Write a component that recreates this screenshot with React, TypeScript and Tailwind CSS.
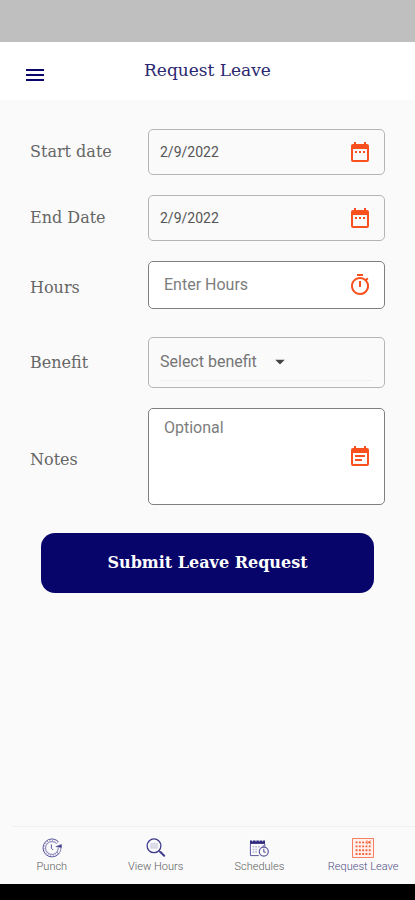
import clsx from "clsx";
import type { ReactNode } from "react";
import { useState } from "react";
import { MdDateRange, MdEventNote, MdMenu, MdOutlineTimer } from "react-icons/md";

const serif = "font-['DejaVu_Serif',serif]";

type FieldRowProps = {
  id: string;
  label: string;
  labelClass?: string;
  boxClass: string;
  icon?: ReactNode;
  children: ReactNode;
};

function FieldRow({ id, label, labelClass, boxClass, icon, children }: FieldRowProps) {
  return (
    <div className="flex items-center">
      <label
        htmlFor={id}
        className={clsx(serif, "w-[118px] shrink-0 text-base text-[#666666]", labelClass)}
      >
        {label}
      </label>
      <div className={clsx("flex min-w-0 flex-1 items-center rounded-[5px] border pr-3", boxClass)}>
        {children}
        {icon}
      </div>
    </div>
  );
}

function PunchIcon() {
  return (
    <svg viewBox="0 0 20 20" className="size-5" fill="none" stroke="#5c58a0" aria-hidden="true">
      <path d="M16.6 3.8A9 9 0 1 0 16.8 15.8" strokeWidth="1" />
      <path d="M14.6 5.6A6.4 6.4 0 1 0 14.8 14.2" strokeWidth="0.8" />
      <path d="M15.6 4.8A7.7 7.7 0 1 0 15.9 14.9" strokeWidth="1.4" strokeDasharray="1 1.6" opacity="0.5" />
      <path d="M9.4 6.4v3.8l1.8 1.8" strokeWidth="1" />
      <path d="M13.8 8.6l3-1 2.6-1.2.2 3.2z" fill="#3c3785" strokeWidth="0.6" />
      <path d="M19 9.4c0 2.4-.8 4.4-2.2 6.4l-2-1.6c1-1.4 1.4-2.8 1.4-4.4" strokeWidth="0.8" />
    </svg>
  );
}

function ViewHoursIcon() {
  return (
    <svg viewBox="0 0 20 20" className="size-5" fill="none" stroke="#3f3b8c" aria-hidden="true">
      <circle cx="8" cy="7.8" r="6.9" strokeWidth="1.3" />
      <path d="M4.2 5.8h7.6M3.8 7.8h8.4M4.2 9.8h7.6" strokeWidth="1.2" opacity="0.25" />
      <path d="M12.8 12.6l1.6 1.4" strokeWidth="1.2" />
      <path d="M14.4 14l3.8 3.8" strokeWidth="2" strokeLinecap="round" />
    </svg>
  );
}

function SchedulesIcon() {
  return (
    <svg viewBox="0 0 20 20" className="size-5" fill="none" stroke="#5c58a0" aria-hidden="true">
      <path d="M1 2.5h15v3.4H1z" fill="#2f2a80" stroke="none" />
      <path d="M3.5 1v2.6M7 1v2.6M10.4 1v2.6M13.6 1v2.6" stroke="#ffffff" strokeWidth="0.7" />
      <path d="M1.4 6v11.6h8.4M15.8 6v1.8" strokeWidth="1" />
      <path d="M3.6 8.8h8M3.6 11.4h5.6M3.6 14h5" strokeWidth="1.5" strokeDasharray="1.7 1" opacity="0.4" />
      <circle cx="14.8" cy="13.6" r="4.5" strokeWidth="1.2" />
      <path d="M13.4 8h2.8M14.8 10.8v3l1.8.8" strokeWidth="1.1" />
    </svg>
  );
}

function RequestLeaveIcon() {
  return (
    <svg viewBox="0 0 22 20" className="h-5 w-[22px]" fill="none" stroke="#f4623f" aria-hidden="true">
      <rect x="0.6" y="0.6" width="20.8" height="18.8" fill="#fff1ec" strokeWidth="0.8" />
      <path
        d="M3.6 4.4h15M3.6 8.4h15M3.6 12.2h15M3.6 16h15"
        strokeWidth="1.9"
        strokeDasharray="1.9 1.4"
      />
      <path d="M14.8 2.4l3.8 3.8M18.6 2.4l-3.8 3.8" strokeWidth="0.9" />
    </svg>
  );
}

const tabs = [
  { label: "Punch", icon: <PunchIcon /> },
  { label: "View Hours", icon: <ViewHoursIcon /> },
  { label: "Schedules", icon: <SchedulesIcon /> },
  { label: "Request Leave", icon: <RequestLeaveIcon />, active: true },
];

const iconClass = "size-6 shrink-0 text-[#f9501e]";
const inputClass = "min-w-0 flex-1 bg-transparent outline-none placeholder:text-[#7d7d7d]";

export default function App() {
  const [startDate, setStartDate] = useState("2/9/2022");
  const [endDate, setEndDate] = useState("2/9/2022");
  const [hours, setHours] = useState("");
  const [benefit, setBenefit] = useState("");
  const [notes, setNotes] = useState("");

  return (
    <div className="flex min-h-screen flex-col bg-[#fafafa] font-[Roboto,sans-serif]">
      <div className="h-[42px] bg-[#bfbfbf]" />
      <header className="flex h-[58px] bg-white px-[23px]">
        <button type="button" aria-label="Menu" className="flex items-center pt-2 text-[#0a066b]">
          <MdMenu className="size-6" aria-hidden="true" />
        </button>
        <h1
          className={clsx(serif, "flex-1 pt-4 pr-6 text-center text-[17px] leading-6 text-[#2b2770]")}
        >
          Request Leave
        </h1>
      </header>

      <main className="flex-1 px-[30px] pt-[29px]">
        <form onSubmit={(event) => event.preventDefault()}>
          <div className="flex flex-col gap-5">
            <FieldRow
              id="startDate"
              label="Start date"
              boxClass="h-[46px] border-[#b5b5b5] pl-[11px]"
              icon={<MdDateRange className={iconClass} aria-hidden="true" />}
            >
              <input
                id="startDate"
                value={startDate}
                onChange={(event) => setStartDate(event.target.value)}
                className={clsx(inputClass, "text-sm text-[#555555]")}
              />
            </FieldRow>
            <FieldRow
              id="endDate"
              label="End Date"
              boxClass="h-[46px] border-[#b5b5b5] pl-[11px]"
              icon={<MdDateRange className={iconClass} aria-hidden="true" />}
            >
              <input
                id="endDate"
                value={endDate}
                onChange={(event) => setEndDate(event.target.value)}
                className={clsx(inputClass, "text-sm text-[#555555]")}
              />
            </FieldRow>
            <FieldRow
              id="hours"
              label="Hours"
              labelClass="pt-1.5"
              boxClass="h-12 border-[#808080] bg-white pl-[15px]"
              icon={<MdOutlineTimer className={iconClass} aria-hidden="true" />}
            >
              <input
                id="hours"
                inputMode="decimal"
                placeholder="Enter Hours"
                value={hours}
                onChange={(event) => setHours(event.target.value)}
                className={clsx(inputClass, "text-base text-[#555555]")}
              />
            </FieldRow>
            <div className="pt-2">
              <FieldRow id="benefit" label="Benefit" boxClass="h-[51px] border-[#b5b5b5] pl-[11px]">
                <div className="flex h-9 flex-1 items-center border-b border-[#f0f0f0]">
                  <div className="relative">
                    <select
                      id="benefit"
                      value={benefit}
                      onChange={(event) => setBenefit(event.target.value)}
                      className="appearance-none bg-transparent pr-8 text-base text-[#757575] outline-none"
                    >
                      <option value="">Select benefit</option>
                    </select>
                    <svg
                      viewBox="0 0 10 5"
                      className="pointer-events-none absolute top-1/2 right-1 h-[5px] w-[10px] -translate-y-1/2"
                      aria-hidden="true"
                    >
                      <path d="M0 0h10L5 5z" fill="#444444" />
                    </svg>
                  </div>
                </div>
              </FieldRow>
            </div>
            <FieldRow
              id="notes"
              label="Notes"
              labelClass="pt-1.5"
              boxClass="h-[97px] border-[#808080] bg-white pl-[15px]"
              icon={<MdEventNote className={iconClass} aria-hidden="true" />}
            >
              <textarea
                id="notes"
                placeholder="Optional"
                value={notes}
                onChange={(event) => setNotes(event.target.value)}
                className={clsx(inputClass, "h-full resize-none py-[7px] text-base text-[#555555]")}
              />
            </FieldRow>
          </div>
          <div className="px-[11px] pt-7">
            <button
              type="submit"
              className={clsx(serif, "h-[60px] w-full rounded-[14px] bg-[#07056a] text-base font-bold text-white")}
            >
              Submit Leave Request
            </button>
          </div>
        </form>
      </main>

      <div className="ml-3 h-px bg-[#f0f0f0]" />
      <nav className="grid h-[57px] grid-cols-4">
        {tabs.map((tab) => (
          <a
            key={tab.label}
            href="#"
            aria-current={tab.active ? "page" : undefined}
            className={clsx(
              "flex flex-col items-center gap-px pt-[11px] text-[11px] leading-4 font-light whitespace-nowrap",
              tab.active ? "text-[#4f4b85]" : "text-[#5c5c5c]",
            )}
          >
            {tab.icon}
            {tab.label}
          </a>
        ))}
      </nav>
      <div className="h-4 bg-black" />
    </div>
  );
}
